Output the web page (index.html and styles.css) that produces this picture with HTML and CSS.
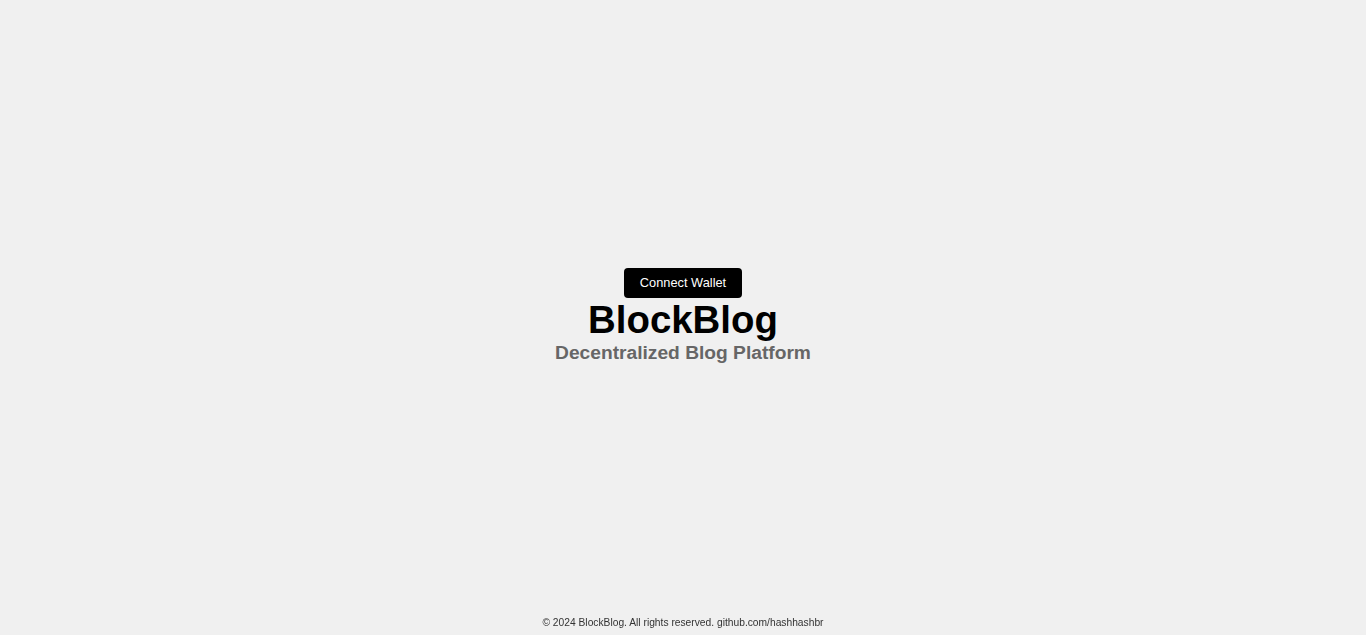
FILE: index.html
```html
<!DOCTYPE html>
<html lang="en">
<head>
<meta charset="utf-8">
<title>BlockBlog</title>
<link rel="stylesheet" href="styles.css">
</head>
<body>
<div class="page">
  <main class="hero">
    <button class="connect">Connect Wallet</button>
    <h1 class="title">BlockBlog</h1>
    <h2 class="subtitle">Decentralized Blog Platform</h2>
  </main>
  <footer class="footer">© 2024 BlockBlog. All rights reserved. github.com/hashhashbr</footer>
</div>
</body>
</html>
```
FILE: styles.css
```css
html, body {
  margin: 0;
  padding: 0;
  background: #f0f0f0;
  font-family: "Liberation Sans", Arial, sans-serif;
}
.page {
  min-height: 100vh;
  display: flex;
  flex-direction: column;
}
.hero {
  box-sizing: border-box;
  min-height: 100vh;
  padding-bottom: 4px;
  display: flex;
  flex-direction: column;
  align-items: center;
  justify-content: center;
}
.connect {
  background: #000;
  color: #fff;
  border: none;
  border-radius: 4px;
  font-family: inherit;
  font-size: 12.8px;
  line-height: 16px;
  padding: 7px 16px;
  cursor: pointer;
}
.title {
  margin: 0;
  font-size: 38.4px;
  line-height: 44px;
  font-weight: bold;
  color: #000;
}
.subtitle {
  margin: 0;
  font-size: 19.2px;
  line-height: 22px;
  font-weight: bold;
  color: #666;
}
.footer {
  position: fixed;
  left: 0;
  right: 0;
  bottom: 0;
  text-align: center;
  font-size: 10.25px;
  line-height: 12px;
  color: #333;
  padding: 0 0 6px;
}
```
